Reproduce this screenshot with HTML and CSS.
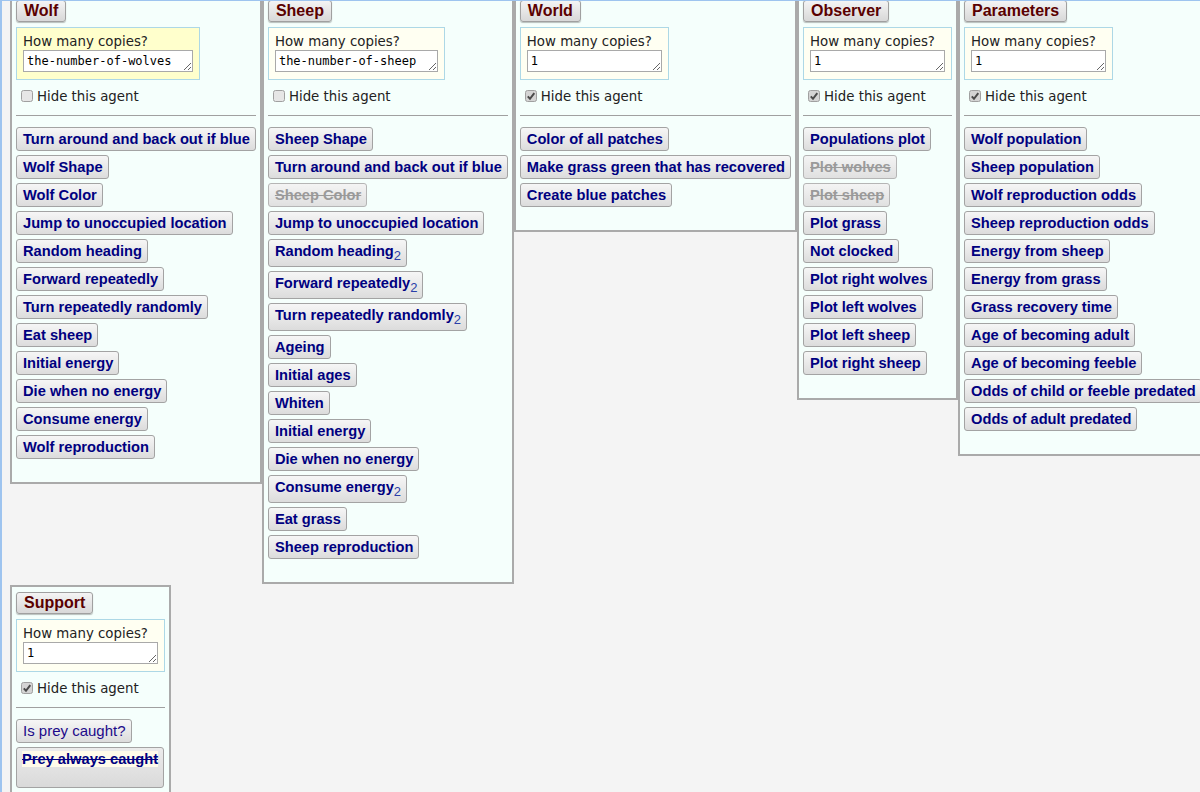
FILE: index.html
```html
<!DOCTYPE html>
<html>
<head>
<meta charset="utf-8">
<title>Agents</title>
<link rel="stylesheet" href="styles.css">
</head>
<body>
<div class="frame">
  <div class="canvas">

    <div class="panel">
      <button class="head">Wolf</button>
      <div class="copies yellow">
        <div class="copies-label">How many copies?</div>
        <textarea class="count w-wolves" rows="1">the-number-of-wolves</textarea>
      </div>
      <label class="hide-row">
        <svg class="cb" width="12" height="12" viewBox="0 0 12 12"><rect x="0.5" y="0.5" width="11" height="11" rx="2" fill="#e6e6e6" stroke="#a0a0a0"/></svg>
        <span>Hide this agent</span>
      </label>
      <hr class="sep">
      <div class="blocks">
        <button class="btn">Turn around and back out if blue</button>
        <button class="btn">Wolf Shape</button>
        <button class="btn">Wolf Color</button>
        <button class="btn">Jump to unoccupied location</button>
        <button class="btn">Random heading</button>
        <button class="btn">Forward repeatedly</button>
        <button class="btn">Turn repeatedly randomly</button>
        <button class="btn">Eat sheep</button>
        <button class="btn">Initial energy</button>
        <button class="btn">Die when no energy</button>
        <button class="btn">Consume energy</button>
        <button class="btn">Wolf reproduction</button>
      </div>
    </div>

    <div class="panel">
      <button class="head">Sheep</button>
      <div class="copies">
        <div class="copies-label">How many copies?</div>
        <textarea class="count w-sheep" rows="1">the-number-of-sheep</textarea>
      </div>
      <label class="hide-row">
        <svg class="cb" width="12" height="12" viewBox="0 0 12 12"><rect x="0.5" y="0.5" width="11" height="11" rx="2" fill="#e6e6e6" stroke="#a0a0a0"/></svg>
        <span>Hide this agent</span>
      </label>
      <hr class="sep">
      <div class="blocks">
        <button class="btn">Sheep Shape</button>
        <button class="btn">Turn around and back out if blue</button>
        <button class="btn off">Sheep Color</button>
        <button class="btn">Jump to unoccupied location</button>
        <button class="btn tall">Random heading<sub class="n">2</sub></button>
        <button class="btn tall">Forward repeatedly<sub class="n">2</sub></button>
        <button class="btn tall">Turn repeatedly randomly<sub class="n">2</sub></button>
        <button class="btn">Ageing</button>
        <button class="btn">Initial ages</button>
        <button class="btn">Whiten</button>
        <button class="btn">Initial energy</button>
        <button class="btn">Die when no energy</button>
        <button class="btn tall">Consume energy<sub class="n">2</sub></button>
        <button class="btn">Eat grass</button>
        <button class="btn">Sheep reproduction</button>
      </div>
    </div>

    <div class="panel">
      <button class="head">World</button>
      <div class="copies">
        <div class="copies-label">How many copies?</div>
        <textarea class="count" rows="1">1</textarea>
      </div>
      <label class="hide-row">
        <svg class="cb" width="12" height="12" viewBox="0 0 12 12"><rect x="0.5" y="0.5" width="11" height="11" rx="2" fill="#d4d4d4" stroke="#a0a0a0"/><path d="M2.8 6.3 L5 8.8 L9.3 3.2" fill="none" stroke="#4a4a4a" stroke-width="2"/></svg>
        <span>Hide this agent</span>
      </label>
      <hr class="sep">
      <div class="blocks">
        <button class="btn">Color of all patches</button>
        <button class="btn">Make grass green that has recovered</button>
        <button class="btn">Create blue patches</button>
      </div>
    </div>

    <div class="panel">
      <button class="head">Observer</button>
      <div class="copies">
        <div class="copies-label">How many copies?</div>
        <textarea class="count" rows="1">1</textarea>
      </div>
      <label class="hide-row">
        <svg class="cb" width="12" height="12" viewBox="0 0 12 12"><rect x="0.5" y="0.5" width="11" height="11" rx="2" fill="#d4d4d4" stroke="#a0a0a0"/><path d="M2.8 6.3 L5 8.8 L9.3 3.2" fill="none" stroke="#4a4a4a" stroke-width="2"/></svg>
        <span>Hide this agent</span>
      </label>
      <hr class="sep">
      <div class="blocks">
        <button class="btn">Populations plot</button>
        <button class="btn off">Plot wolves</button>
        <button class="btn off">Plot sheep</button>
        <button class="btn">Plot grass</button>
        <button class="btn">Not clocked</button>
        <button class="btn">Plot right wolves</button>
        <button class="btn">Plot left wolves</button>
        <button class="btn">Plot left sheep</button>
        <button class="btn">Plot right sheep</button>
      </div>
    </div>

    <div class="panel">
      <button class="head">Parameters</button>
      <div class="copies">
        <div class="copies-label">How many copies?</div>
        <textarea class="count" rows="1">1</textarea>
      </div>
      <label class="hide-row">
        <svg class="cb" width="12" height="12" viewBox="0 0 12 12"><rect x="0.5" y="0.5" width="11" height="11" rx="2" fill="#d4d4d4" stroke="#a0a0a0"/><path d="M2.8 6.3 L5 8.8 L9.3 3.2" fill="none" stroke="#4a4a4a" stroke-width="2"/></svg>
        <span>Hide this agent</span>
      </label>
      <hr class="sep">
      <div class="blocks">
        <button class="btn">Wolf population</button>
        <button class="btn">Sheep population</button>
        <button class="btn">Wolf reproduction odds</button>
        <button class="btn">Sheep reproduction odds</button>
        <button class="btn">Energy from sheep</button>
        <button class="btn">Energy from grass</button>
        <button class="btn">Grass recovery time</button>
        <button class="btn">Age of becoming adult</button>
        <button class="btn">Age of becoming feeble</button>
        <button class="btn">Odds of child or feeble predated</button>
        <button class="btn">Odds of adult predated</button>
      </div>
    </div>

    <div class="panel">
      <button class="head">Support</button>
      <div class="copies">
        <div class="copies-label">How many copies?</div>
        <textarea class="count" rows="1">1</textarea>
      </div>
      <label class="hide-row">
        <svg class="cb" width="12" height="12" viewBox="0 0 12 12"><rect x="0.5" y="0.5" width="11" height="11" rx="2" fill="#d4d4d4" stroke="#a0a0a0"/><path d="M2.8 6.3 L5 8.8 L9.3 3.2" fill="none" stroke="#4a4a4a" stroke-width="2"/></svg>
        <span>Hide this agent</span>
      </label>
      <hr class="sep">
      <div class="blocks">
        <button class="btn plain">Is prey caught?</button>
        <button class="btn big"><span class="hl">Prey always caught</span></button>
      </div>
    </div>

  </div>
</div>
</body>
</html>
```

FILE: styles.css
```css
html, body {
  margin: 0;
  padding: 0;
  height: 100%;
  overflow: hidden;
  background: #f4f4f4;
}

.frame {
  height: 791px;
  border-top: 1px solid #9ec4ef;
  border-left: 2px solid #9ec4ef;
  overflow: hidden;
  background: #f4f4f4;
}

.canvas {
  width: 1260px;
  margin-top: -8px;
  padding-left: 8px;
  display: flex;
  flex-wrap: wrap;
  align-items: flex-start;
}

.panel {
  border: 2px solid #aaaaaa;
  background: #f5fffc;
  padding: 5px 4px 23px 4px;
  margin: 0 0 1px 0;
  display: flex;
  flex-direction: column;
  align-items: flex-start;
}

.head {
  height: 22px;
  margin: 0 0 5px 0;
  padding: 0 7px;
  border: 1px solid #a0a0a0;
  border-radius: 3px;
  background: linear-gradient(#f4f4f4, #d8d8d8);
  box-shadow: 0 1px 1px rgba(0,0,0,0.25);
  font-family: "Liberation Sans", Arial, sans-serif;
  font-weight: bold;
  font-size: 16px;
  line-height: 20px;
  color: #5a0000;
}

.copies {
  border: 1px solid #add8e6;
  background: #fffff2;
  padding: 6px 6px 7px 6px;
}

.copies.yellow {
  background: #ffffcc;
}

.copies-label {
  font-family: "DejaVu Sans", Verdana, sans-serif;
  font-size: 13.33px;
  line-height: 16px;
  color: #222;
}

.count {
  display: block;
  box-sizing: border-box;
  width: 135px;
  height: 22px;
  margin: 0;
  padding: 2px 3px;
  border: 1px solid #a9a9a9;
  background: #fff;
  font-family: "DejaVu Sans Mono", "Liberation Mono", monospace;
  font-size: 12px;
  line-height: 16px;
  color: #000;
  overflow: hidden;
}

.count.w-wolves { width: 170px; }
.count.w-sheep { width: 163px; }

.hide-row {
  display: flex;
  align-items: center;
  gap: 4px;
  height: 20px;
  margin: 6px 0 0 5px;
  font-family: "DejaVu Sans", Verdana, sans-serif;
  font-size: 13.33px;
  color: #222;
}

.cb {
  display: block;
  flex: none;
}

.sep {
  align-self: stretch;
  height: 0;
  margin: 9px 0 11px 0;
  border: 0;
  border-top: 1px solid #a0a0a0;
}

.blocks {
  display: flex;
  flex-direction: column;
  align-items: flex-start;
  gap: 4px;
}

.btn {
  box-sizing: border-box;
  height: 24px;
  margin: 0;
  padding: 0 5px 0 6px;
  border: 1px solid #a3a3a3;
  border-radius: 3px;
  background: linear-gradient(#f6f6f6, #dcdcdc);
  font-family: "Liberation Sans", Arial, sans-serif;
  font-weight: bold;
  font-size: 14.67px;
  line-height: 22px;
  color: #000080;
  white-space: nowrap;
  text-align: left;
  vertical-align: top;
}

.btn.tall {
  height: 28px;
  padding-bottom: 4px;
}

.n {
  font-weight: normal;
  font-size: 13px;
  line-height: 0;
  vertical-align: -4px;
  color: #2a3fa8;
}

.btn.off {
  color: #9a9a9a;
  text-decoration: line-through;
  border-color: #b5b5b5;
  background: linear-gradient(#f4f4f4, #e0e0e0);
}

.btn.plain {
  font-weight: normal;
  font-size: 15px;
  color: #1c0a8a;
}

.btn.big {
  height: 41px;
  padding: 0 5px 17px 5px;
  background: linear-gradient(#ececec, #d9d9d9);
}

.hl {
  background: #fffbea;
  text-decoration: line-through;
}
```
